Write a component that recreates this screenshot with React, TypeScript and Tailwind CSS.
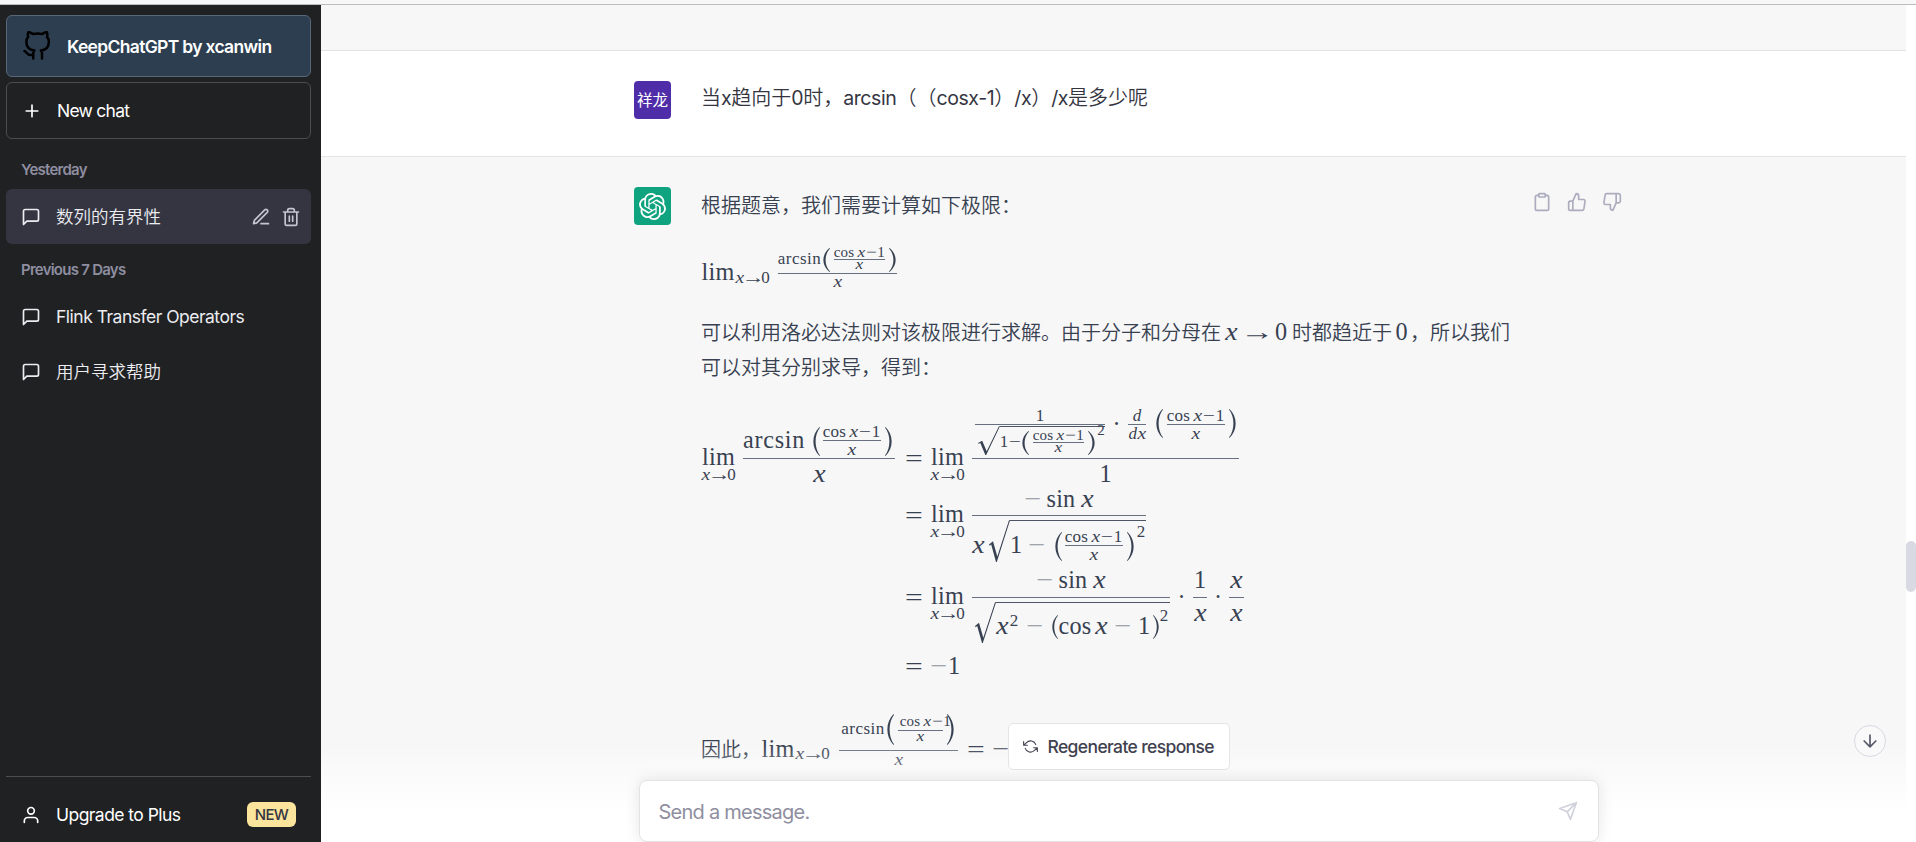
import React from "react";
import { SiOpenai } from "react-icons/si";

type Kids = { children?: React.ReactNode };
type Cls = { className?: string };

function Icon({ className = "", children }: Cls & Kids) {
  return (
    <svg
      viewBox="0 0 24 24"
      fill="none"
      stroke="currentColor"
      strokeWidth="2"
      strokeLinecap="round"
      strokeLinejoin="round"
      className={`shrink-0 ${className}`}
    >
      {children}
    </svg>
  );
}

const ChatIcon = () => (
  <Icon className="size-5">
    <path d="M21 15a2 2 0 0 1-2 2H7l-4 4V5a2 2 0 0 1 2-2h14a2 2 0 0 1 2 2z" />
  </Icon>
);

/* ---------- math pieces ---------- */

/* 24px text, baseline 21px below its top */
function Big({ className = "", children }: Cls & Kids) {
  return (
    <span className={`flex h-6 shrink-0 justify-center pt-px whitespace-pre text-[24.2px] leading-6 ${className}`}>
      {children}
    </span>
  );
}

/* 17px text, baseline 14px below its top */
function Mid({ className = "", children }: Cls & Kids) {
  return (
    <span className={`flex h-[17px] shrink-0 justify-center whitespace-pre text-[17px] leading-[17px] ${className}`}>
      {children}
    </span>
  );
}

/* 15px text, baseline 12px below its top */
function Small({ className = "", children }: Cls & Kids) {
  return (
    <span className={`flex h-[15px] shrink-0 justify-center whitespace-pre text-[15px] leading-[15px] ${className}`}>
      {children}
    </span>
  );
}

const X = ({ children = "x" }: Kids) => <i className="inline-block scale-x-115">{children}</i>;

const Bar = () => <span className="block h-px w-full bg-[#677080]" />;

function Open({ className = "" }: Cls) {
  return (
    <svg viewBox="0 0 7 29" preserveAspectRatio="none" fill="currentColor" className={`shrink-0 ${className}`}>
      <path d="M6.5 .1C-1.7 8-1.7 21 6.5 28.9L7 28.4C1.1 21 1.1 8 7 .6Z" />
    </svg>
  );
}

function Close({ className = "" }: Cls) {
  return (
    <svg viewBox="0 0 7 29" preserveAspectRatio="none" fill="currentColor" className={`shrink-0 ${className}`}>
      <path d="M.5 .1C8.7 8 8.7 21 .5 28.9L0 28.4C5.9 21 5.9 8 0 .6Z" />
    </svg>
  );
}

function Radical({ className = "" }: Cls) {
  return (
    <svg viewBox="0 0 21 42" preserveAspectRatio="none" fill="currentColor" className={`shrink-0 ${className}`}>
      <path d="M0 24.6L4 21.2L8.3 36.5L20 .2L21 .2V1.2L20.7 1.2L7.8 42H7L2.2 24.6L.6 25.8Z" />
    </svg>
  );
}

const Sub = ({ className = "" }: Cls) => (
  <span className={`flex w-[35px] shrink-0 ${className}`}>
    <Mid className="w-[10px]"><X /></Mid>
    <Mid className="w-[16px]"><span className="inline-block scale-x-135">→</span></Mid>
    <Mid className="w-[9px]">0</Mid>
  </span>
);

const Lim = ({ className = "" }: Cls) => (
  <span className={`flex w-[35px] shrink-0 flex-col ${className}`}>
    <Big className="tracking-[0.2px]">lim</Big>
    <Sub className="-mt-[2px]" />
  </span>
);

const Eq = ({ className = "" }: Cls) => (
  <Big className={`w-[17px] ${className}`}><span className="inline-block scale-x-130">=</span></Big>
);

const Minus = ({ className = "" }: Cls) => (
  <Big className={`w-4 text-[#8d9098] ${className}`}><span className="inline-block scale-x-125">−</span></Big>
);

const InnerMid = ({ className = "" }: Cls) => (
  <span className={`flex w-[58px] shrink-0 flex-col ${className}`}>
    <span className="flex">
      <Mid className="w-[23px] tracking-[0.3px]">cos</Mid>
      <Mid className="ml-[3px] w-[9px]"><X /></Mid>
      <Mid className="w-[14px]"><span className="inline-block scale-x-125">−</span></Mid>
      <Mid className="w-[8px]">1</Mid>
    </span>
    <Bar />
    <Mid><X /></Mid>
  </span>
);

const CosSmall = () => (
  <span className="flex w-[51px] shrink-0">
    <Small className="w-[20px] tracking-[0.2px]">cos</Small>
    <Small className="ml-[3px] w-[9px]"><X /></Small>
    <Small className="w-[11px]"><span className="inline-block scale-x-125">−</span></Small>
    <Small className="w-[8px]">1</Small>
  </span>
);

const InnerSmall = ({ className = "" }: Cls) => (
  <span className={`flex w-[51px] shrink-0 flex-col ${className}`}>
    <span className="flex h-[14px]"><CosSmall /></span>
    <Bar />
    <Small className="-mt-[3px]"><X /></Small>
  </span>
);

const Dot = ({ className = "" }: Cls) => <Big className={className}>·</Big>;

function LimitInline() {
  return (
    <div className="flex h-[50px] items-start">
      <Big className="mt-[14px] ml-px w-[34px] tracking-[0.2px]">lim</Big>
      <Sub className="mt-6" />
      <span className="ml-2 flex w-[119px] flex-col">
        <span className="flex h-7 items-start">
          <Mid className="mt-[5px] w-[43px] tracking-[0.45px]">arcsin</Mid>
          <Open className="mt-[3px] ml-[2px] h-6 w-[7px]" />
          <InnerSmall className="ml-1" />
          <Close className="mt-[3px] ml-1 h-6 w-[7px]" />
        </span>
        <Bar />
        <Mid className="-mt-px"><X /></Mid>
      </span>
    </div>
  );
}

function Derivation() {
  return (
    <div className="flex flex-col">
      <div className="flex h-20 items-start">
        <Lim className="mt-[39px] ml-px" />
        <span className="ml-[7px] flex w-[152px] shrink-0 flex-col">
          <span className="flex h-[53px] items-start">
            <Big className="mt-[22px] w-[62px] tracking-[0.7px]">arcsin</Big>
            <Open className="mt-[22px] ml-2 h-[29px] w-[7px]" />
            <InnerMid className="mt-[18px] ml-[3px]" />
            <Close className="mt-[22px] ml-1 h-[29px] w-[7px]" />
          </span>
          <Bar />
          <Big className="mt-[2px]"><X /></Big>
        </span>
        <Eq className="mt-[41px] ml-[10px]" />
        <Lim className="mt-[39px] ml-2" />
        <span className="ml-[7px] flex w-[267px] shrink-0 flex-col">
          <span className="flex h-[53px] items-start">
            <span className="ml-[3px] flex w-[130px] shrink-0 flex-col">
              <Mid className="mt-[2px]">1</Mid>
              <Bar />
              <span className="mt-px flex items-start">
                <Radical className="ml-[3px] h-[29px] w-[22px]" />
                <span className="flex h-[29px] w-[105px] items-start border-t border-[#4b5563]">
                  <Mid className="mt-[6px] w-[8px]">1</Mid>
                  <Mid className="mt-[6px] w-[13px]"><span className="inline-block scale-x-125">−</span></Mid>
                  <Open className="mt-[4px] ml-px h-6 w-[7px]" />
                  <InnerSmall className="mt-px ml-1" />
                  <Close className="mt-[4px] ml-1 h-6 w-[7px]" />
                  <Small className="-mt-1 ml-[2px] w-[8px]">2</Small>
                </span>
              </span>
            </span>
            <Dot className="mt-[6px] w-[23px]" />
            <span className="mt-[2px] flex w-[18px] shrink-0 flex-col">
              <Mid><i>d</i></Mid>
              <Bar />
              <Mid className="gap-px"><i>d</i><X /></Mid>
            </span>
            <Open className="mt-[4px] ml-[10px] h-[29px] w-[7px]" />
            <InnerMid className="mt-[2px] ml-1" />
            <Close className="mt-[4px] ml-1 h-[29px] w-[7px]" />
          </span>
          <Bar />
          <Big className="mt-[2px]">1</Big>
        </span>
      </div>

      <div className="flex h-[82px] items-start">
        <Eq className="mt-[18px] ml-[205px]" />
        <Lim className="mt-4 ml-2" />
        <span className="ml-[7px] flex w-[174px] shrink-0 flex-col">
          <span className="flex h-[30px] items-start justify-center pt-px">
            <Minus />
            <Big className="ml-[6px] w-[29px] tracking-[0.2px]">sin</Big>
            <Big className="ml-[5px] w-[13px]"><X /></Big>
          </span>
          <Bar />
          <span className="flex items-start">
            <Big className="mt-4 w-[13px]"><X /></Big>
            <Radical className="mt-[4px] ml-[4px] h-[42px] w-[21px]" />
            <span className="mt-[4px] flex h-[42px] w-[136px] items-start border-t border-[#4b5563]">
              <Big className="mt-[11px] ml-px w-[10px]">1</Big>
              <Minus className="mt-[11px] ml-2" />
              <Open className="mt-[11px] ml-[10px] h-[29px] w-[7px]" />
              <InnerMid className="mt-[7px] ml-[3px]" />
              <Close className="mt-[11px] ml-1 h-[29px] w-[7px]" />
              <Mid className="mt-[2px] ml-[3px] w-[8px]">2</Mid>
            </span>
          </span>
        </span>
      </div>

      <div className="flex h-[82px] items-start">
        <Eq className="mt-[18px] ml-[205px]" />
        <Lim className="mt-4 ml-2" />
        <span className="ml-[7px] flex w-[198px] shrink-0 flex-col">
          <span className="flex h-[30px] items-start justify-center">
            <Minus />
            <Big className="ml-[6px] w-[29px] tracking-[0.2px]">sin</Big>
            <Big className="ml-[5px] w-[13px]"><X /></Big>
          </span>
          <Bar />
          <span className="flex items-start">
            <Radical className="mt-[4px] ml-[3px] h-[41px] w-[21px]" />
            <span className="mt-[4px] flex h-[41px] w-[174px] items-start border-t border-[#4b5563]">
              <Big className="mt-[10px] w-[13px]"><X /></Big>
              <Mid className="mt-[9px] ml-px w-[8px]">2</Mid>
              <Minus className="mt-[10px] ml-[9px]" />
              <Open className="mt-3 ml-[9px] h-6 w-[6px]" />
              <Big className="mt-[10px] ml-px w-8 tracking-[0.3px]">cos</Big>
              <Big className="mt-[10px] ml-[4px] w-[13px]"><X /></Big>
              <Minus className="mt-[10px] ml-[7px]" />
              <Big className="mt-[10px] ml-[8px] w-[10px]">1</Big>
              <Close className="mt-3 ml-[4px] h-6 w-[6px]" />
              <Mid className="mt-[4px] ml-px w-[8px]">2</Mid>
            </span>
          </span>
        </span>
        <Dot className="mt-[17px] w-[23px]" />
        <span className="flex w-[14px] shrink-0 flex-col">
          <Big className="mb-[6px]">1</Big>
          <Bar />
          <Big className="mt-[2px]"><X /></Big>
        </span>
        <Dot className="mt-[17px] w-[22px]" />
        <span className="flex w-[15px] shrink-0 flex-col">
          <Big className="mb-[6px]"><X /></Big>
          <Bar />
          <Big className="mt-[2px]"><X /></Big>
        </span>
      </div>

      <div className="flex h-8 items-start">
        <Eq className="mt-[5px] ml-[205px]" />
        <Minus className="mt-1 ml-[9px]" />
        <Big className="mt-1 ml-px w-[12px]">1</Big>
      </div>
    </div>
  );
}

function Conclusion() {
  return (
    <div className="flex items-start">
      <p className={`${cjk} mt-[17px] ml-px w-[60px] text-xl leading-[35px]`}>因此，</p>
      <div className="flex items-start font-['Liberation_Serif',serif]">
        <Big className="mt-[22px] w-[34px] tracking-[0.2px]">lim</Big>
        <Sub className="mt-[31px]" />
        <span className="ml-[9px] flex w-[119px] flex-col">
          <span className="flex h-9 items-start">
            <Mid className="mt-[6px] ml-[2px] w-11 tracking-[0.45px]">arcsin</Mid>
            <Open className="ml-[2px] h-[31px] w-[7px]" />
            <span className="ml-[4px] flex w-[45px] shrink-0 flex-col">
              <span className="flex h-4 pl-[2px]"><CosSmall /></span>
              <Bar />
              <Small className="-mt-[2px]"><X /></Small>
            </span>
            <Close className="ml-1 h-[31px] w-[7px]" />
          </span>
          <Bar />
          <Mid><X /></Mid>
        </span>
        <Eq className="mt-[23px] ml-[9px]" />
        <Big className="mt-[22px] ml-[9px] w-4"><span className="inline-block scale-x-125">−</span></Big>
        <Big className="mt-[22px] w-3">1</Big>
      </div>
    </div>
  );
}

/* ---------- page ---------- */

const cjk = "font-['Noto_Sans_CJK_SC',sans-serif] font-[350] whitespace-nowrap";

const Latin = ({ children }: Kids) => (
  <span className="text-[19.5px] font-normal tracking-[-0.4px]">{children}</span>
);

function Sidebar() {
  return (
    <aside className="flex w-[321px] shrink-0 flex-col bg-[#202123] pt-[10px] pr-[9px] pl-[5px] text-[17.5px] text-white">
      <div className="mx-px flex h-[62px] shrink-0 items-center rounded-md border border-[#586777] bg-[#2c3e50] pl-[15px]">
        <Icon className="size-[30px] text-black">
          <path d="M9 19c-5 1.5-5-2.5-7-3m14 6v-3.87a3.37 3.37 0 0 0-.94-2.61c3.14-.35 6.44-1.54 6.44-7A5.44 5.44 0 0 0 20 4.77 5.07 5.07 0 0 0 19.91 1S18.73.65 16 2.48a13.38 13.38 0 0 0-7 0C6.27.65 5.09 1 5.09 1A5.07 5.07 0 0 0 5 4.77a5.44 5.44 0 0 0-1.5 3.78c0 5.42 3.3 6.61 6.44 7A3.37 3.37 0 0 0 9 18.13V22" />
        </Icon>
        <span className="ml-[15px] pt-[2px] font-semibold tracking-[-0.68px]">KeepChatGPT by xcanwin</span>
      </div>
      <div className="mx-px mt-[5px] flex h-[57px] shrink-0 items-center rounded-md border border-[#4d4d4f] pl-[15px]">
        <Icon className="size-5"><path d="M12 5v14M5 12h14" /></Icon>
        <span className="ml-[15px] pt-[2px] tracking-[-0.75px]">New chat</span>
      </div>
      <h3 className="mt-5 flex h-[22px] items-center pt-px pl-4 text-[15px] font-semibold tracking-[-0.75px] text-[#8e8ea0]">Yesterday</h3>
      <div className="mx-px mt-[8px] flex h-[55px] shrink-0 items-center rounded-md bg-[#343541] pl-[15px] text-[#ececf1]">
        <ChatIcon />
        <span className={`${cjk} ml-[15px] flex-1`}>数列的有界性</span>
        <span className="flex gap-[10px] pr-[10px] text-[#c5c5d2]">
          <Icon className="size-5">
            <path d="M12 20h9M16.5 3.5a2.121 2.121 0 0 1 3 3L7 19l-4 1 1-4L16.5 3.5z" />
          </Icon>
          <Icon className="size-5">
            <path d="M3 6h18M19 6v14a2 2 0 0 1-2 2H7a2 2 0 0 1-2-2V6m3 0V4a2 2 0 0 1 2-2h4a2 2 0 0 1 2 2v2M10 11v6M14 11v6" />
          </Icon>
        </span>
      </div>
      <h3 className="mt-[15px] flex h-[22px] items-center pt-px pl-4 text-[15px] font-semibold tracking-[-0.75px] text-[#8e8ea0]">Previous 7 Days</h3>
      <div className="mx-px mt-2 flex h-[55px] shrink-0 items-center pl-[15px] text-[#ececf1]">
        <ChatIcon />
        <span className="ml-[15px] pt-[2px] tracking-[-0.5px]">Flink Transfer Operators</span>
      </div>
      <div className="mx-px flex h-[55px] shrink-0 items-center pl-[15px] text-[#ececf1]">
        <ChatIcon />
        <span className={`${cjk} ml-[15px]`}>用户寻求帮助</span>
      </div>
      <div className="mx-px mt-auto flex h-[66px] shrink-0 items-start border-t border-[#4d4d4f] pt-[25px] pl-[15px]">
        <Icon className="mt-[3px] size-5">
          <path d="M20 21v-2a4 4 0 0 0-4-4H8a4 4 0 0 0-4 4v2" />
          <circle cx="12" cy="7" r="4" />
        </Icon>
        <span className="ml-[15px] flex-1 leading-[26px] tracking-[-0.55px]">Upgrade to Plus</span>
        <span className="mr-[15px] flex h-[25px] w-[49px] items-center justify-center rounded-md bg-[#fbe49c] pt-px text-[15px] font-medium tracking-[-0.6px] text-[#343541]">NEW</span>
      </div>
    </aside>
  );
}

export default function App() {
  return (
    <div className="flex h-[842px] w-[1916px] flex-col overflow-hidden bg-white font-['Inter','Noto_Sans_CJK_SC',sans-serif]">
      <div className="h-[5px] shrink-0 border-b border-[#bdbdbd] bg-[#f7f7f7]" />
      <div className="flex min-h-0 flex-1">
        <Sidebar />
        <main className="relative flex min-w-0 flex-1">
          <div className="flex min-w-0 flex-1 flex-col overflow-hidden">
            <div className="h-[46px] shrink-0 border-b border-[#e3e3e3] bg-[#f7f7f7]" />

            <section className="h-[106px] shrink-0 border-b border-[#e5e5e5] bg-white pt-[30px] pl-[313px]">
              <div className="flex w-[960px]">
                <div className="flex h-[38px] w-[37px] shrink-0 items-center justify-center rounded-sm bg-[#502da8] font-['Noto_Sans_CJK_SC',sans-serif] text-[15.5px] text-white">
                  祥龙
                </div>
                <p className="ml-[29px] pl-px font-[350] whitespace-nowrap text-xl leading-[35px] text-[#343541] [text-spacing-trim:space-all]">
                  当<Latin>x</Latin>趋向于<Latin>0</Latin>时，<Latin>arcsin</Latin>（（<Latin>cosx-1</Latin>）<Latin>/x</Latin>）<Latin>/x</Latin>是多少呢
                </p>
              </div>
            </section>

            <section className="flex-1 bg-[#f7f7f7] pt-[30px] pl-[313px]">
              <div className="flex w-[960px]">
                <div className="flex h-[38px] w-[37px] shrink-0 items-center justify-center rounded-sm bg-[#10a37f] text-white">
                  <SiOpenai size={27} />
                </div>
                <article className="ml-[29px] flex w-[830px] shrink-0 flex-col text-xl leading-[35px] text-[#374151]">
                  <p className={`${cjk} ml-px h-[35px]`}>根据题意，我们需要计算如下极限：</p>
                  <div className="mt-[23px] font-['Liberation_Serif',serif]"><LimitInline /></div>
                  <div className={`${cjk} mt-[19px] ml-px flex h-[35px]`}>
                    <span>可以利用洛必达法则对该极限进行求解。由于分子和分母在</span>
                    <span className="flex w-[71px] pt-[5px] pl-[4px] font-['Liberation_Serif',serif] font-normal">
                      <Big className="w-[13px]"><X /></Big>
                      <Big className="ml-[7px] w-[24px]"><span className="inline-block scale-x-140">→</span></Big>
                      <Big className="ml-[6px] w-[12px]">0</Big>
                    </span>
                    <span>时都趋近于</span>
                    <span className="flex w-[18px] justify-center pt-[5px] pl-px font-['Liberation_Serif',serif] font-normal">
                      <Big>0</Big>
                    </span>
                    <span>，所以我们</span>
                  </div>
                  <p className={`${cjk} ml-px h-[35px]`}>可以对其分别求导，得到：</p>
                  <div className="mt-[21px] font-['Liberation_Serif',serif]"><Derivation /></div>
                  <div className="mt-[33px]"><Conclusion /></div>
                </article>
                <div className="-mr-10 ml-[2px] flex gap-[15px] pt-[5px] text-[#acacbe]">
                  <Icon className="size-5">
                    <path d="M16 4h2a2 2 0 0 1 2 2v14a2 2 0 0 1-2 2H6a2 2 0 0 1-2-2V6a2 2 0 0 1 2-2h2" />
                    <rect x="8" y="2" width="8" height="4" rx="1" />
                  </Icon>
                  <Icon className="size-5">
                    <path d="M14 9V5a3 3 0 0 0-3-3l-4 9v11h11.28a2 2 0 0 0 2-1.7l1.38-9a2 2 0 0 0-2-2.3zM7 22H4a2 2 0 0 1-2-2v-7a2 2 0 0 1 2-2h3" />
                  </Icon>
                  <Icon className="size-5">
                    <path d="M10 15v4a3 3 0 0 0 3 3l4-9V2H5.72a2 2 0 0 0-2 1.7l-1.38 9a2 2 0 0 0 2 2.3zm7-13h2.67A2.31 2.31 0 0 1 22 4v7a2.31 2.31 0 0 1-2.33 2H17" />
                  </Icon>
                </div>
              </div>
            </section>
          </div>

          <div className="w-[10px] shrink-0 bg-white pt-[536px]">
            <div className="h-[51px] rounded-[5px] bg-[#d9d9e3]" />
          </div>

          <div className="absolute inset-x-0 bottom-0 flex h-[122px] flex-col items-center bg-linear-to-b from-white/0 from-20% to-white to-75% pt-[3px]">
            <button className="flex h-[47px] w-[222px] shrink-0 items-center rounded-[5px] border border-[#e5e5e5] bg-white pl-[14px] text-[17.5px] text-[#40414f]">
              <Icon className="size-[15px]">
                <path d="M1 4v6h6M23 20v-6h-6M20.49 9A9 9 0 0 0 5.64 5.64L1 10m22 4l-4.64 4.36A9 9 0 0 1 3.51 15" strokeWidth="1.7" />
              </Icon>
              <span className="ml-[10px] pt-[2px] font-medium whitespace-nowrap tracking-[-0.63px]">Regenerate response</span>
            </button>
            <div className="mt-[10px] flex h-[62px] w-[960px] shrink-0 items-center rounded-lg border border-[#e3e3e3] bg-white pr-5 pl-[19px] shadow-[0_0_15px_rgba(0,0,0,0.10)]">
              <span className="flex-1 pt-[2px] text-xl tracking-[-0.75px] text-[#8e8ea0]">Send a message.</span>
              <Icon className="size-5 text-[#d0d0dc]">
                <path d="M22 2L11 13M22 2l-7 20-4-9-9-4 20-7z" />
              </Icon>
            </div>
          </div>

          <button className="absolute top-[720px] right-[30px] flex size-8 items-center justify-center rounded-full border border-[#d9d9e3] bg-[#f9f9fa] text-[#565869]">
            <Icon className="size-5"><path d="M12 5v14M19 12l-7 7-7-7" /></Icon>
          </button>
        </main>
      </div>
    </div>
  );
}
